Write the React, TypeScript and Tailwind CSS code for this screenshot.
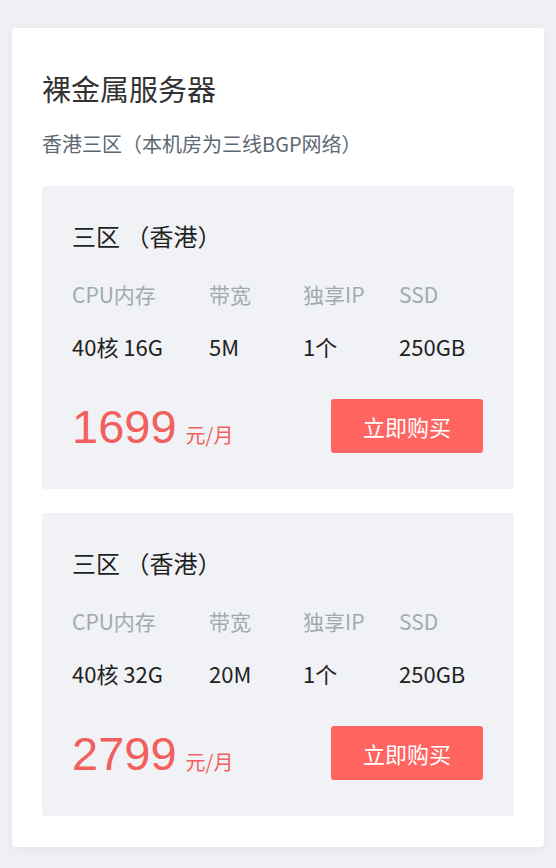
import React from "react";

type Plan = {
  cpu: string;
  bw: string;
  ip: string;
  ssd: string;
  price: string;
};

const plans: Plan[] = [
  { cpu: "40核 16G", bw: "5M", ip: "1个", ssd: "250GB", price: "1699" },
  { cpu: "40核 32G", bw: "20M", ip: "1个", ssd: "250GB", price: "2799" },
];

function PlanCard({ p }: { p: Plan }) {
  return (
    <div className="rounded-[3px] bg-[#f0f2f5] pl-[30px] pr-[31px] pt-[34px] pb-[36px]">
      <div className="text-[24px] leading-[32px] text-[#1f1f1f]">三区 （香港）</div>
      <div className="mt-[26px] grid grid-cols-[137px_94px_96px_1fr] text-[21px] leading-[32px] text-[#a2aab1]">
        <div>CPU内存</div>
        <div>带宽</div>
        <div>独享IP</div>
        <div>SSD</div>
      </div>
      <div className="mt-[20px] grid grid-cols-[137px_94px_96px_1fr] text-[22px] leading-[32px] text-[#222]">
        <div>{p.cpu}</div>
        <div>{p.bw}</div>
        <div>{p.ip}</div>
        <div>{p.ssd}</div>
      </div>
      <div className="mt-[37px] flex h-[54px] items-center justify-between">
        <div className="flex items-baseline pt-[2px] text-[#f25f5f]">
          <span className="font-['Liberation_Sans',Arial,sans-serif] text-[47px] leading-[54px]">
            {p.price}
          </span>
          <span className="ml-[9px] text-[20px]">元/月</span>
        </div>
        <button className="h-[54px] w-[152px] rounded-[3px] bg-[#ff6461] text-[22px] text-white">
          立即购买
        </button>
      </div>
    </div>
  );
}

export default function App() {
  return (
    <div className="min-h-[868px] bg-[#eef0f3] px-[12px] pt-[28px] pb-[21px] font-['Noto_Sans_CJK_SC','Noto_Sans',sans-serif]">
      <div className="rounded-[4px] bg-white px-[30px] pt-[40px] pb-[31px] shadow-[0_2px_12px_rgba(0,0,0,0.05)]">
        <h1 className="text-[29px] leading-[40px] text-[#333]">裸金属服务器</h1>
        <div className="mt-[22px] text-[20px] leading-[28px] text-[#5d6771]">
          香港三区（本机房为三线BGP网络）
        </div>
        <div className="mt-[28px] flex flex-col gap-[24px]">
          {plans.map((p, i) => (
            <PlanCard key={i} p={p} />
          ))}
        </div>
      </div>
    </div>
  );
}
